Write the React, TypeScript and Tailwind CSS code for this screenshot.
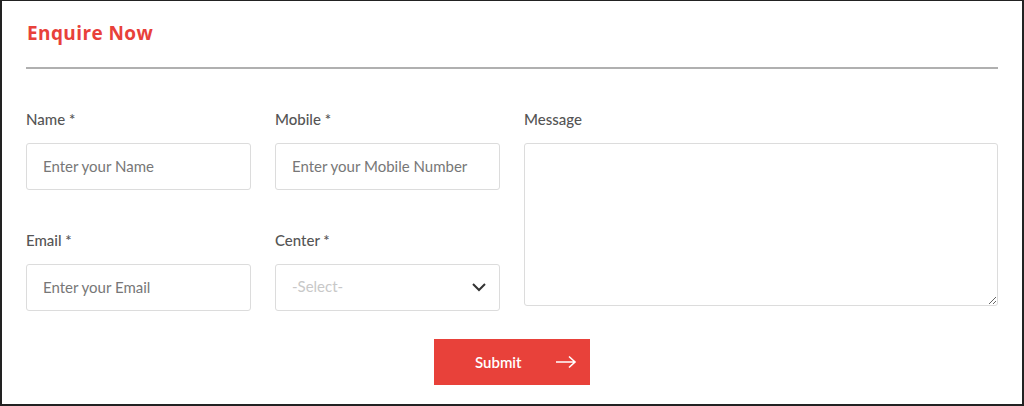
export default function App() {
  const label = "block text-[15px] leading-5 text-[#555] font-medium font-['Lato',sans-serif]";
  const input =
    "w-full h-[47px] border border-[#dcdcdc] rounded-[3px] px-4 pb-[2px] text-[15px] text-[#444] placeholder:text-[#777] font-['Lato',sans-serif] outline-none";

  return (
    <div className="w-[1024px] h-[406px] bg-white border-t border-l-2 border-r-2 border-b-2 border-[#222] pl-[24px] pr-[24px] pt-[20px] font-['Lato',sans-serif]">
      <h2 className="text-[19px] leading-6 font-bold tracking-[0.4px] text-[#e8413a] font-['Open_Sans',sans-serif] pl-[1px]">
        Enquire Now
      </h2>
      <div className="mt-[22px] h-[2px] bg-[#b0b0b0]" />

      <form className="mt-[40px] flex gap-6">
        <div className="grid grid-cols-2 gap-x-6 gap-y-[40px] w-[474px] shrink-0">
          <div>
            <label className={label}>Name *</label>
            <input className={`${input} mt-[14px]`} placeholder="Enter your Name" />
          </div>
          <div>
            <label className={label}>Mobile *</label>
            <input className={`${input} mt-[14px]`} placeholder="Enter your Mobile Number" />
          </div>
          <div>
            <label className={label}>Email *</label>
            <input className={`${input} mt-[14px]`} placeholder="Enter your Email" />
          </div>
          <div>
            <label className={label}>Center *</label>
            <div className="relative mt-[14px]">
              <select
                defaultValue=""
                className="w-full h-[47px] appearance-none border border-[#dcdcdc] rounded-[3px] px-4 pb-[2px] text-[15px] text-[#c8c8c8] bg-white font-['Lato',sans-serif] outline-none"
              >
                <option value="">-Select-</option>
              </select>
              <svg
                className="absolute right-[13px] top-[17px] pointer-events-none"
                width="16"
                height="12"
                viewBox="0 0 16 12"
                fill="none"
                stroke="#333"
                strokeWidth="2"
              >
                <path d="M2 3l6 6 6-6" />
              </svg>
            </div>
          </div>
        </div>
        <div className="flex-1">
          <label className={label}>Message</label>
          <textarea className="mt-[14px] block w-full h-[163px] border border-[#dcdcdc] rounded-[3px] px-4 py-3 text-[15px] outline-none" />
        </div>
      </form>

      <div className="mt-[28px] flex justify-center">
        <button className="w-[156px] h-[46px] bg-[#e8413a] text-white text-[15px] font-semibold font-['Lato',sans-serif] flex items-center pl-[41px]">
          <span>Submit</span>
          <svg className="ml-[33px]" width="22" height="14" viewBox="0 0 22 14" fill="none" stroke="white" strokeWidth="1.6">
            <path d="M1 7h19M14 1.5L20 7l-6 5.5" />
          </svg>
        </button>
      </div>
    </div>
  );
}
